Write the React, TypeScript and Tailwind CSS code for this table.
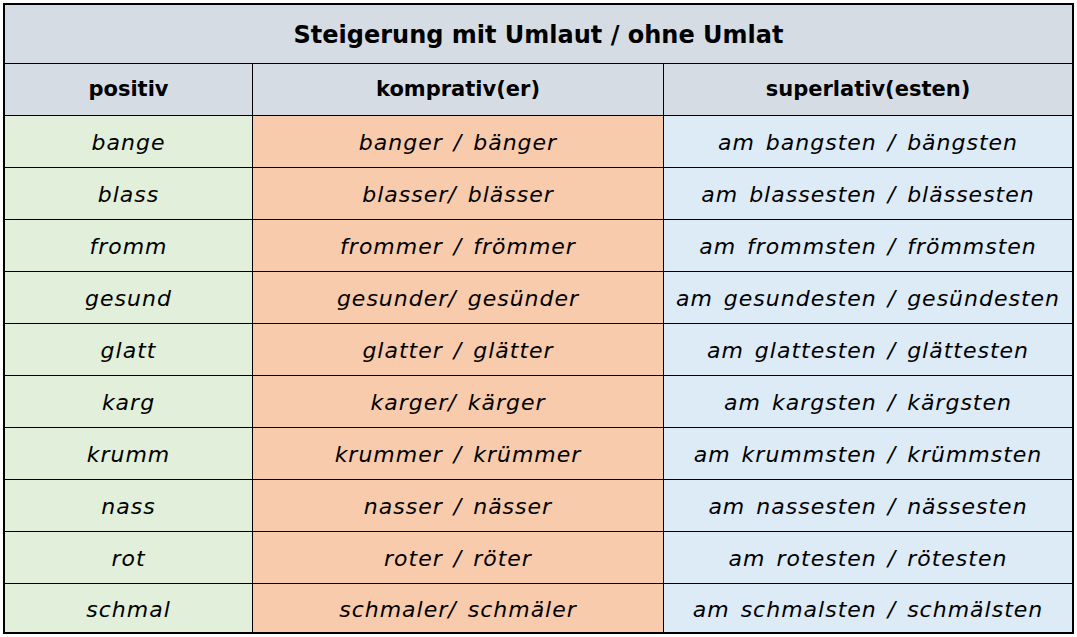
const rows: [string, string, string][] = [
  ["bange", "banger / bänger", "am bangsten / bängsten"],
  ["blass", "blasser/ blässer", "am blassesten / blässesten"],
  ["fromm", "frommer / frömmer", "am frommsten / frömmsten"],
  ["gesund", "gesunder/ gesünder", "am gesundesten / gesündesten"],
  ["glatt", "glatter / glätter", "am glattesten / glättesten"],
  ["karg", "karger/ kärger", "am kargsten / kärgsten"],
  ["krumm", "krummer / krümmer", "am krummsten / krümmsten"],
  ["nass", "nasser / nässer", "am nassesten / nässesten"],
  ["rot", "roter / röter", "am rotesten / rötesten"],
  ["schmal", "schmaler/ schmäler", "am schmalsten / schmälsten"],
];

function App() {
  const head = "font-['DejaVu_Sans',sans-serif] font-bold text-black";
  const hand = "font-['DejaVu_Sans',sans-serif] italic text-[22px] tracking-[1px] [word-spacing:3px] text-black";

  return (
    <div className="w-[1077px] h-[637px] bg-white pt-[3px] pl-[3px]">
      <div className="w-[1071px] border-2 border-black">
        <div className={`h-[59px] bg-[#d6dce4] border-b border-black flex items-center justify-center pt-[2px] text-[24px] ${head}`}>
          Steigerung mit Umlaut / ohne Umlat
        </div>
        <div className="grid grid-cols-[248px_411px_408px]">
          {["positiv", "komprativ(er)", "superlativ(esten)"].map((h, i) => (
            <div
              key={h}
              className={`h-[52px] bg-[#d6dce4] border-b border-black flex items-center justify-center text-[21px] ${head} ${i < 2 ? "border-r" : ""}`}
            >
              {h}
            </div>
          ))}
          {rows.map((r, ri) => {
            const last = ri === rows.length - 1;
            const h = last ? "h-[48px]" : "h-[52px] border-b border-black";
            return [
              <div key={ri + "a"} className={`${h} bg-[#e2efda] border-r border-black flex items-center justify-center pt-[2px] ${hand}`}>
                {r[0]}
              </div>,
              <div key={ri + "b"} className={`${h} bg-[#f8cbad] border-r border-black flex items-center justify-center pt-[2px] ${hand}`}>
                {r[1]}
              </div>,
              <div key={ri + "c"} className={`${h} bg-[#ddebf7] flex items-center justify-center pt-[2px] ${hand}`}>
                {r[2]}
              </div>,
            ];
          })}
        </div>
      </div>
    </div>
  );
}

export default App;
